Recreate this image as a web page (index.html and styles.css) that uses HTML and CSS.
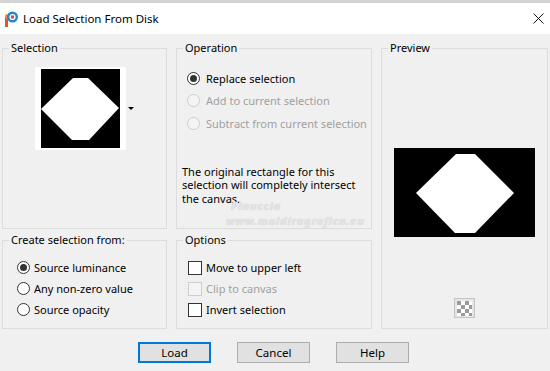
FILE: index.html
```html
<!DOCTYPE html>
<html lang="en">

<head>
    <meta charset="UTF-8">
    <meta name="viewport" content="width=device-width, initial-scale=1.0">
    <title>Load Selection From Disk</title>
    <link rel="stylesheet" href="styles.css">
</head>

<body>
    <div class="titlebar">
        <svg class="app-icon" width="14" height="17" viewBox="0 0 14 17">
            <path d="M1 6 L1 16 L4 16 L4 8 Z" fill="#e8502a" />
            <path d="M1 6 Q1 3 3 3 L4 4 L4 9 Z" fill="#f08a2c" />
            <circle cx="8.5" cy="6" r="4.3" fill="none" stroke="#1e88d2" stroke-width="2.4" />
            <rect x="7" y="4.5" width="3" height="3" fill="#e23c5a" />
        </svg>
        <span class="title">Load Selection From Disk</span>
        <svg class="close" width="11" height="11" viewBox="0 0 11 11">
            <path d="M0.5 0.5 L10.5 10.5 M10.5 0.5 L0.5 10.5" stroke="#111" stroke-width="1" />
        </svg>
    </div>

    <div class="dialog">
        <div class="groups">
            <fieldset class="group selection">
                <legend>Selection</legend>
                <div class="thumb-row">
                    <div class="thumb">
                        <svg width="79" height="79" viewBox="0 0 79 79">
                            <rect width="79" height="79" fill="#000" />
                            <polygon points="32,9 47,9 78,39 48,71 31,71 0,40" fill="#fff" />
                        </svg>
                    </div>
                    <span class="drop-arrow"></span>
                </div>
            </fieldset>

            <fieldset class="group operation">
                <legend>Operation</legend>
                <div class="choices">
                    <label class="choice"><span class="radio checked"></span>Replace selection</label>
                    <label class="choice disabled"><span class="radio"></span>Add to current selection</label>
                    <label class="choice disabled"><span class="radio"></span>Subtract from current selection</label>
                </div>
                <p class="note">The original rectangle for this<br>selection will completely intersect<br>the canvas.</p>
                <div class="watermark">
                    <span>Pinuccia</span>
                    <span>www.maldiragrafica.eu</span>
                </div>
            </fieldset>

            <fieldset class="group preview">
                <legend>Preview</legend>
                <div class="preview-body">
                    <svg width="141" height="89" viewBox="0 0 141 89">
                        <rect width="141" height="89" fill="#000" />
                        <polygon points="62,6 81,6 120,45 81,85 61,85 22,45" fill="#fff" />
                    </svg>
                    <span class="checker">
                        <svg width="15" height="15" viewBox="0 0 15 15">
                            <rect width="15" height="15" fill="#fff" />
                            <rect x="0" y="0" width="4" height="4" fill="#9a9a9a" />
                            <rect x="8" y="0" width="4" height="4" fill="#9a9a9a" />
                            <rect x="4" y="4" width="4" height="4" fill="#9a9a9a" />
                            <rect x="12" y="4" width="3" height="4" fill="#9a9a9a" />
                            <rect x="0" y="8" width="4" height="4" fill="#9a9a9a" />
                            <rect x="8" y="8" width="4" height="4" fill="#9a9a9a" />
                            <rect x="4" y="12" width="4" height="3" fill="#9a9a9a" />
                            <rect x="12" y="12" width="3" height="3" fill="#9a9a9a" />
                        </svg>
                    </span>
                </div>
            </fieldset>

            <fieldset class="group create">
                <legend>Create selection from:</legend>
                <div class="choices tight">
                    <label class="choice"><span class="radio checked"></span>Source luminance</label>
                    <label class="choice"><span class="radio"></span>Any non-zero value</label>
                    <label class="choice"><span class="radio"></span>Source opacity</label>
                </div>
            </fieldset>

            <fieldset class="group options">
                <legend>Options</legend>
                <div class="choices tight">
                    <label class="choice"><span class="check"></span>Move to upper left</label>
                    <label class="choice disabled"><span class="check"></span>Clip to canvas</label>
                    <label class="choice"><span class="check"></span>Invert selection</label>
                </div>
            </fieldset>
        </div>

        <div class="buttons">
            <button class="btn default">Load</button>
            <button class="btn">Cancel</button>
            <button class="btn">Help</button>
        </div>
    </div>
</body>

</html>
```

FILE: styles.css
```css
body {
    margin: 0;
    background-color: #f0f0f0;
    font-family: "Noto Sans", "Open Sans", sans-serif;
    font-size: 11px;
    color: #000;
    width: 550px;
    height: 371px;
    overflow: hidden;
}

.titlebar {
    height: 31px;
    border-top: 3px solid #d4d4d4;
    background-color: #fff;
    display: flex;
    align-items: center;
    padding-left: 4px;
}

.app-icon {
    margin-top: 1px;
}

.title {
    margin-left: 5px;
    font-size: 11.5px;
}

.close {
    margin-left: auto;
    margin-right: 6px;
}

.dialog {
    padding: 6px 0 0 2px;
}

.groups {
    display: grid;
    grid-template-columns: 165px 196px 167px;
    grid-template-rows: 189px 97px;
    column-gap: 9px;
    row-gap: 3px;
}

.group {
    margin: 0;
    padding: 0;
    border: 1px solid #dcdcdc;
    min-width: 0;
}

.group legend {
    margin-left: 6px;
    padding: 0 2px;
    line-height: 16px;
}

.preview {
    grid-column: 3;
    grid-row: 1 / span 2;
}

/* selection thumbnail */

.thumb-row {
    display: flex;
    align-items: center;
    margin: 11px 0 0 32px;
}

.thumb {
    background-color: #fff;
    padding: 2px 6px;
    display: flex;
}

.drop-arrow {
    margin-left: 2px;
    width: 0;
    height: 0;
    border-left: 3px solid transparent;
    border-right: 3px solid transparent;
    border-top: 3px solid #000;
}

/* radios and checkboxes */

.choices {
    margin: 11px 0 0 10px;
}

.choice {
    display: flex;
    align-items: center;
    height: 22.5px;
    gap: 6px;
    white-space: nowrap;
}

.choices.tight {
    margin: 9px 0 0 14px;
}

.choices.tight .choice {
    height: 21px;
    gap: 4px;
}

.options .choices.tight {
    margin-left: 11px;
}

.options .choice {
    gap: 3px;
}

.radio {
    width: 11px;
    height: 11px;
    border: 1px solid #333;
    border-radius: 50%;
    background-color: #fff;
    display: flex;
    align-items: center;
    justify-content: center;
}

.radio.checked::after {
    content: "";
    width: 7px;
    height: 7px;
    border-radius: 50%;
    background-color: #333;
}

.check {
    width: 12px;
    height: 12px;
    border: 1px solid #333;
    background-color: #fff;
}

.choice.disabled {
    color: #a0a0a0;
}

.choice.disabled .radio,
.choice.disabled .check {
    border-color: #cdcdcd;
    background-color: #f4f4f4;
}

.note {
    margin: 30px 0 0 5px;
    line-height: 13.5px;
}

.watermark {
    display: flex;
    flex-direction: column;
    margin: -7px 0 0 49px;
    color: #e4e4e4;
    font-size: 11px;
    font-weight: bold;
    font-style: italic;
    line-height: 15px;
    text-shadow: 0 0 1px #c4c4c4;
    letter-spacing: 0.8px;
}

.watermark span:first-child {
    margin-left: 5px;
}

/* preview */

.preview-body {
    display: flex;
    flex-direction: column;
    align-items: center;
    padding-top: 92px;
}

.checker {
    margin-top: 61px;
    width: 19px;
    height: 18px;
    border: 1px solid #c4c4c4;
    background-color: #e6e6e6;
    display: flex;
    align-items: center;
    justify-content: center;
}

/* buttons */

.buttons {
    display: flex;
    gap: 26px;
    padding: 13px 0 0 136px;
}

.btn {
    width: 73px;
    height: 21px;
    padding: 0;
    font-family: inherit;
    font-size: 11.5px;
    color: #000;
    background-color: #e1e1e1;
    border: 1px solid #adadad;
}

.btn.default {
    border: 2px solid #0078d7;
}
```
